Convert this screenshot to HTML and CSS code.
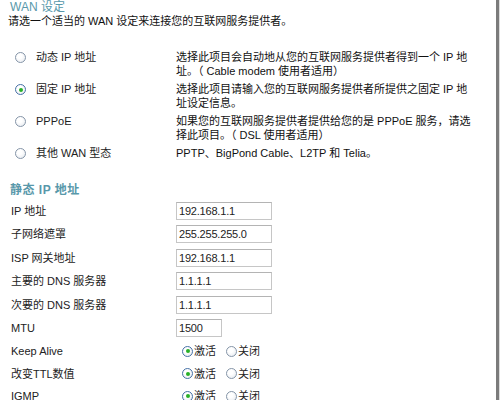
FILE: index.html
```html
<!DOCTYPE html>
<html lang="zh-CN">
<head>
<meta charset="utf-8">
<title>WAN 设定</title>
<link rel="stylesheet" href="styles.css">
</head>
<body>
<div class="frame">
  <div class="page">
    <div class="title">WAN 设定</div>
    <div class="intro">请选一个适当的 WAN 设定来连接您的互联网服务提供者。</div>

    <div class="options">
      <div class="opt">
        <div class="opt-label"><span class="radio"></span><span>动态 IP 地址</span></div>
        <div class="opt-desc">选择此项目会自动地从您的互联网服务提供者得到一个 IP 地<br>址。（ Cable modem 使用者适用）</div>
      </div>
      <div class="opt">
        <div class="opt-label"><span class="radio on"></span><span>固定 IP 地址</span></div>
        <div class="opt-desc">选择此项目请输入您的互联网服务提供者所提供之固定 IP 地<br>址设定信息。</div>
      </div>
      <div class="opt">
        <div class="opt-label"><span class="radio"></span><span>PPPoE</span></div>
        <div class="opt-desc">如果您的互联网服务提供者提供给您的是 PPPoE 服务，请选<br>择此项目。（ DSL 使用者适用）</div>
      </div>
      <div class="opt">
        <div class="opt-label"><span class="radio"></span><span>其他 WAN 型态</span></div>
        <div class="opt-desc">PPTP、BigPond Cable、L2TP 和 Telia。</div>
      </div>
    </div>

    <div class="section">静态 IP 地址</div>

    <div class="form">
      <div class="row"><div class="lbl">IP 地址</div><div class="fld"><span class="input">192.168.1.1</span></div></div>
      <div class="row"><div class="lbl">子网络遮罩</div><div class="fld"><span class="input">255.255.255.0</span></div></div>
      <div class="row"><div class="lbl">ISP 网关地址</div><div class="fld"><span class="input">192.168.1.1</span></div></div>
      <div class="row"><div class="lbl">主要的 DNS 服务器</div><div class="fld"><span class="input">1.1.1.1</span></div></div>
      <div class="row"><div class="lbl">次要的 DNS 服务器</div><div class="fld"><span class="input">1.1.1.1</span></div></div>
      <div class="row"><div class="lbl">MTU</div><div class="fld"><span class="input short">1500</span></div></div>
      <div class="row rrow"><div class="lbl">Keep Alive</div><div class="fld choice"><span class="radio sm on"></span><span class="ctext">激活</span><span class="radio sm"></span><span class="ctext">关闭</span></div></div>
      <div class="row rrow"><div class="lbl">改变TTL数值</div><div class="fld choice"><span class="radio sm on"></span><span class="ctext">激活</span><span class="radio sm"></span><span class="ctext">关闭</span></div></div>
      <div class="row rrow"><div class="lbl">IGMP</div><div class="fld choice"><span class="radio sm on"></span><span class="ctext">激活</span><span class="radio sm"></span><span class="ctext">关闭</span></div></div>
    </div>
  </div>
</div>
</body>
</html>
```

FILE: styles.css
```css
html, body {
  margin: 0;
  padding: 0;
  background: #fff;
}

body {
  font-family: "Liberation Sans", "Noto Sans CJK SC", sans-serif;
  font-size: 11px;
  color: #111;
  overflow: hidden;
}

.frame {
  width: 500px;
  box-sizing: border-box;
  border-right: 1px solid #dcdcdc;
  min-height: 420px;
}

.page {
  width: 499px;
  box-sizing: border-box;
  border-right: 3px solid #7b7b7b;
  min-height: 420px;
  padding-left: 8px;
}

.title {
  color: #5898aa;
  font-size: 12px;
  line-height: 14px;
  padding-left: 2px;
}

.intro {
  line-height: 14px;
  color: #111;
}

.options {
  margin-top: 22px;
}

.opt {
  display: flex;
  height: 32px;
}

.opt-label {
  width: 168px;
  box-sizing: border-box;
  padding-left: 7px;
  display: flex;
  align-items: flex-start;
  line-height: 14px;
  color: #222;
}

.opt-label .radio {
  margin-top: 2px;
  margin-right: 10px;
}

.opt-desc {
  white-space: nowrap;
  line-height: 14px;
  color: #111;
}

.radio {
  display: inline-block;
  flex: none;
  width: 11px;
  height: 11px;
  box-sizing: border-box;
  border-radius: 50%;
  border: 1px solid #8595a8;
  background: radial-gradient(circle at 40% 35%, #ffffff 30%, #e2e6ec 100%);
  position: relative;
}

.radio.on {
  border-color: #4671a6;
}

.radio.on::after {
  content: "";
  position: absolute;
  left: 2.5px;
  top: 2.5px;
  width: 4px;
  height: 4px;
  border-radius: 50%;
  background: #28b028;
}

.section {
  color: #5898aa;
  font-weight: bold;
  font-size: 12px;
  line-height: 14px;
  margin-top: 5px;
  padding-left: 2px;
  letter-spacing: 0.5px;
}

.form {
  margin-top: 2px;
  padding-left: 3px;
}

.row {
  display: flex;
  align-items: center;
  height: 23.5px;
}

.rrow {
  height: 22.5px;
}

.lbl {
  width: 165px;
  flex: none;
  color: #222;
  line-height: 14px;
}

.fld {
  display: flex;
  align-items: center;
}

.input {
  display: block;
  width: 96px;
  height: 18px;
  box-sizing: border-box;
  border: 1px solid #c6c6c6;
  border-top-color: #b4b4b4;
  padding-left: 2px;
  line-height: 16px;
  color: #222;
  letter-spacing: -0.2px;
}

.input.short {
  width: 46px;
}

.choice {
  padding-left: 6px;
}

.choice .radio {
  margin-right: 1px;
}

.ctext {
  line-height: 14px;
  color: #222;
  margin-right: 10px;
}
```
